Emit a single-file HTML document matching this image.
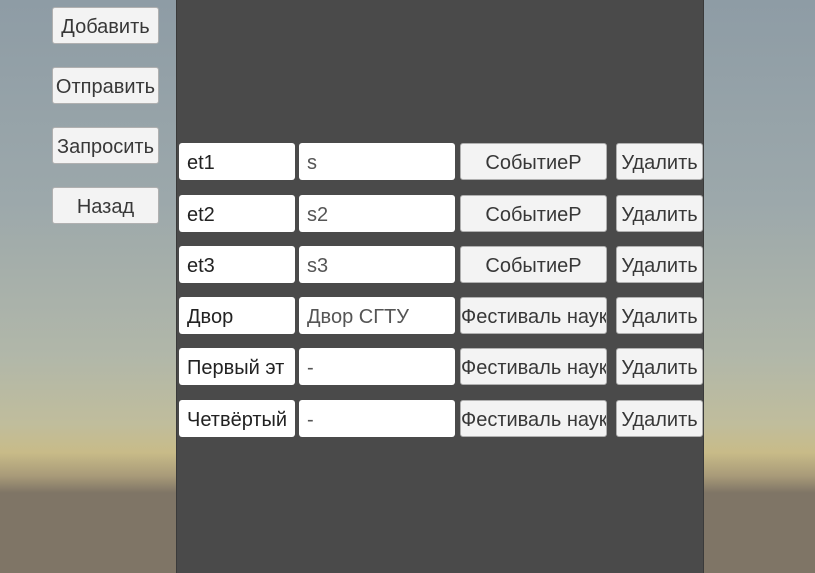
<!DOCTYPE html>
<html><head><meta charset="utf-8"><style>
*{margin:0;padding:0;box-sizing:border-box}
body{width:815px;height:573px;overflow:hidden;position:relative;font-family:"Liberation Sans",Arial,sans-serif;
background:linear-gradient(180deg,#8e9ca5 0%,#9ca8ab 35%,#b1b7a9 62%,#c0bd9c 74%,#c8bb88 79%,#a99b79 83%,#7f7566 86%,#7f7566 100%);}
.panel{position:absolute;left:176px;top:0;width:528px;height:573px;background:#4a4a4a;border-left:1px solid #3a3a3a;border-right:1px solid #3a3a3a}
.b{position:absolute;background:#f3f3f3;border:1px solid #b0b0b0;border-radius:3px;color:#383838;font-size:20px;font-weight:400;display:flex;align-items:center;justify-content:center;white-space:nowrap;overflow:hidden;padding-top:3px}
.i{position:absolute;background:#fff;border-radius:3px;font-size:20px;font-weight:400;display:flex;align-items:center;padding-left:8px;padding-top:3px;white-space:nowrap;overflow:hidden;color:#222}
.g{color:#555}
.l{justify-content:flex-start}
</style></head><body>
<div class="panel"></div>
<div class="b" style="left:52px;top:7px;width:107px;height:37px">Добавить</div>
<div class="b" style="left:52px;top:67px;width:107px;height:37px">Отправить</div>
<div class="b" style="left:52px;top:127px;width:107px;height:37px">Запросить</div>
<div class="b" style="left:52px;top:187px;width:107px;height:37px">Назад</div>

<div class="i" style="left:179px;top:143px;width:116px;height:37px">et1</div>
<div class="i g" style="left:299px;top:143px;width:156px;height:37px">s</div>
<div class="b" style="left:460px;top:143px;width:147px;height:37px">СобытиеР</div>
<div class="b" style="left:616px;top:143px;width:87px;height:37px">Удалить</div>

<div class="i" style="left:179px;top:195px;width:116px;height:37px">et2</div>
<div class="i g" style="left:299px;top:195px;width:156px;height:37px">s2</div>
<div class="b" style="left:460px;top:195px;width:147px;height:37px">СобытиеР</div>
<div class="b" style="left:616px;top:195px;width:87px;height:37px">Удалить</div>

<div class="i" style="left:179px;top:246px;width:116px;height:37px">et3</div>
<div class="i g" style="left:299px;top:246px;width:156px;height:37px">s3</div>
<div class="b" style="left:460px;top:246px;width:147px;height:37px">СобытиеР</div>
<div class="b" style="left:616px;top:246px;width:87px;height:37px">Удалить</div>

<div class="i" style="left:179px;top:297px;width:116px;height:37px">Двор</div>
<div class="i g" style="left:299px;top:297px;width:156px;height:37px">Двор СГТУ</div>
<div class="b l" style="left:460px;top:297px;width:147px;height:37px">Фестиваль наук</div>
<div class="b" style="left:616px;top:297px;width:87px;height:37px">Удалить</div>

<div class="i" style="left:179px;top:348px;width:116px;height:37px">Первый эт</div>
<div class="i g" style="left:299px;top:348px;width:156px;height:37px">-</div>
<div class="b l" style="left:460px;top:348px;width:147px;height:37px">Фестиваль наук</div>
<div class="b" style="left:616px;top:348px;width:87px;height:37px">Удалить</div>

<div class="i" style="left:179px;top:400px;width:116px;height:37px">Четвёртый</div>
<div class="i g" style="left:299px;top:400px;width:156px;height:37px">-</div>
<div class="b l" style="left:460px;top:400px;width:147px;height:37px">Фестиваль наук</div>
<div class="b" style="left:616px;top:400px;width:87px;height:37px">Удалить</div>
</body></html>
